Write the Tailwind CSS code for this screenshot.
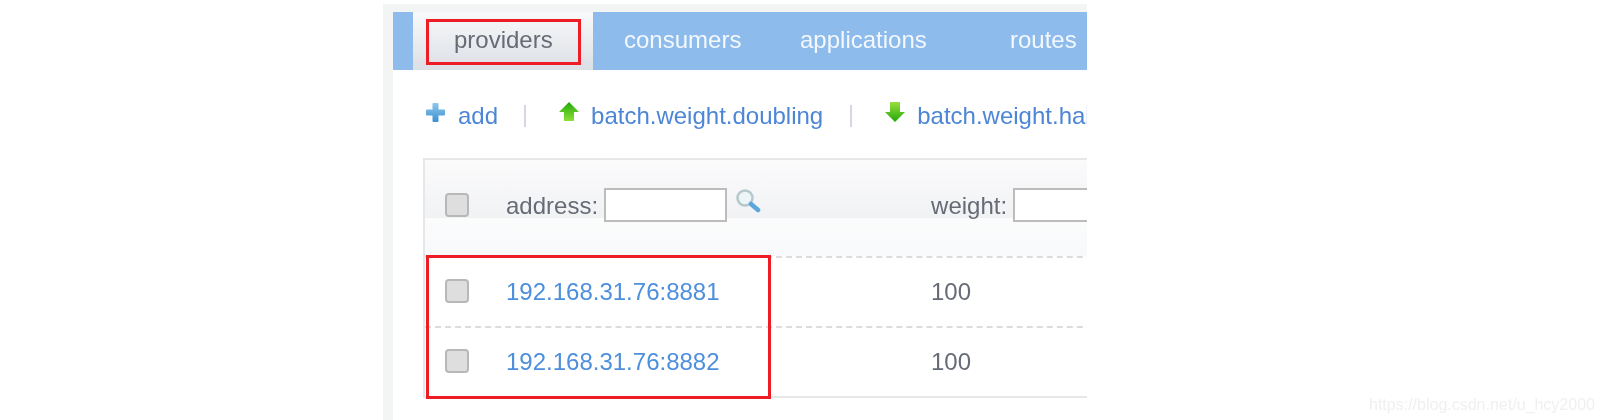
<!DOCTYPE html>
<html lang="en">

<head>
    <meta charset="UTF-8" />
    <title>providers</title>
    <script src="https://cdn.jsdelivr.net/npm/@tailwindcss/browser@4"></script>
</head>

<body class="relative w-[1602px] h-[420px] overflow-hidden bg-white font-['Liberation_Sans',Arial,sans-serif] text-[24px]">
    <div class="ml-[383px] mt-1 w-[704px] h-[416px] bg-[#f3f5f5] pt-2 pl-2.5 overflow-hidden blur-[0.5px]">
        <div class="relative w-[694px] h-[408px] bg-white overflow-hidden">

            <!-- tabs -->
            <div class="flex items-center h-[58px] bg-[#8dbbec] text-white/90">
                <div class="ml-5 w-[180px] h-full flex items-center pl-[41px] pb-0.5 bg-linear-to-b from-[#f8f9fa] to-[#dcdfe5] text-[#666b75]">providers</div>
                <span class="ml-[31px] w-[176px] mb-0.5">consumers</span>
                <span class="w-[210px] mb-0.5">applications</span>
                <span class="mb-0.5">routes</span>
            </div>

            <!-- toolbar -->
            <div class="flex items-center h-[88px] pl-[32px] text-[#4d86d6] whitespace-nowrap">
                <svg class="shrink-0 w-[21px] h-[21px] -mt-1" viewBox="0 0 21 21">
                    <defs>
                        <linearGradient id="plus" x1="0" y1="0" x2="0" y2="1">
                            <stop offset="0" stop-color="#8cc8ec" />
                            <stop offset="1" stop-color="#3d8fd0" />
                        </linearGradient>
                        <linearGradient id="up" x1="0" y1="0" x2="0" y2="1">
                            <stop offset="0" stop-color="#22a80a" />
                            <stop offset="1" stop-color="#8ee03a" />
                        </linearGradient>
                        <linearGradient id="down" x1="0" y1="0" x2="0" y2="1">
                            <stop offset="0" stop-color="#9ade3c" />
                            <stop offset="1" stop-color="#22a80a" />
                        </linearGradient>
                    </defs>
                    <path d="M8.5 1h4a1 1 0 0 1 1 1v5.5H19a1 1 0 0 1 1 1v4a1 1 0 0 1-1 1h-5.5V19a1 1 0 0 1-1 1h-4a1 1 0 0 1-1-1v-5.5H2a1 1 0 0 1-1-1v-4a1 1 0 0 1 1-1h5.5V2a1 1 0 0 1 1-1z" fill="url(#plus)" />
                </svg>
                <span class="ml-3 mt-1">add</span>
                <span class="shrink-0 ml-[26px] mt-1 w-0.5 h-[22px] bg-[#d5d8e0]"></span>
                <svg class="shrink-0 ml-[32px] w-[22px] h-[22px] -mt-1" viewBox="0 0 22 22">
                    <path d="M11 1l10 10h-5v9H6v-9H1z" fill="url(#up)" />
                </svg>
                <span class="ml-[11px] mt-1">batch.weight.doubling</span>
                <span class="shrink-0 ml-[27px] mt-1 w-0.5 h-[22px] bg-[#d5d8e0]"></span>
                <svg class="shrink-0 ml-[32px] w-[22px] h-[22px] -mt-1" viewBox="0 0 22 22">
                    <path d="M6 1h10v10h5L11 21 1 11h5z" fill="url(#down)" />
                </svg>
                <span class="ml-[11px] mt-1">batch.weight.halving</span>
            </div>

            <!-- table -->
            <div class="ml-[30px] w-[700px] border-y-2 border-l-2 border-[#e6e7e8] text-[#666b75]">
                <div class="h-[96px] bg-linear-to-b from-white to-[#f8f9fa]">
                    <div class="flex items-center h-[58px] pt-[26px] pl-5 bg-linear-to-b from-[#fbfbfc] to-[#f1f2f4]">
                        <span class="shrink-0 w-6 h-6 rounded-[4px] bg-[#dedede] border-2 border-[#b8b8b8] mt-1.5"></span>
                        <span class="ml-[37px] mt-2">address:</span>
                        <span class="shrink-0 ml-1.5 w-[123px] h-[34px] bg-white border-2 border-[#bcbcbc] mt-1.5"></span>
                        <svg class="shrink-0 ml-2 w-[26px] h-[26px] -mt-0.5" viewBox="0 0 26 26">
                            <circle cx="10" cy="10" r="7.5" fill="#eef5f7" stroke="#b4c8cd" stroke-width="2.5" />
                            <path d="M16 16l7 6" stroke="#5ba6dc" stroke-width="4.5" stroke-linecap="round" />
                        </svg>
                        <span class="ml-[170px] mt-2">weight:</span>
                        <span class="shrink-0 ml-1.5 w-[123px] h-[34px] bg-white border-2 border-[#bcbcbc] mt-1.5"></span>
                    </div>
                </div>
                <div class="flex items-center h-[70px] pl-5 border-t-2 border-dashed border-[#dcdcdc]">
                    <span class="shrink-0 w-6 h-6 rounded-[4px] bg-[#dedede] border-2 border-[#b8b8b8] -mt-0.5"></span>
                    <span class="ml-[37px] w-[425px] text-[#4d8fdc]">192.168.31.76:8881</span>
                    <span>100</span>
                </div>
                <div class="flex items-center h-[70px] pl-5 border-t-2 border-dashed border-[#dcdcdc]">
                    <span class="shrink-0 w-6 h-6 rounded-[4px] bg-[#dedede] border-2 border-[#b8b8b8] -mt-0.5"></span>
                    <span class="ml-[37px] w-[425px] text-[#4d8fdc]">192.168.31.76:8882</span>
                    <span>100</span>
                </div>
            </div>

            <!-- red annotations -->
            <div class="absolute left-[33px] top-[7px] w-[155px] h-[46px] border-[3px] border-[#ee1c25]"></div>
            <div class="absolute left-[33px] top-[243px] w-[345px] h-[144px] border-[3px] border-[#ee1c25]"></div>
        </div>
    </div>

    <!-- watermark -->
    <span class="absolute left-[1369px] top-[393px] text-[16px] text-[#f0f0f0] blur-[0.5px]">https://blog.csdn.net/u_hcy2000</span>
</body>

</html>
